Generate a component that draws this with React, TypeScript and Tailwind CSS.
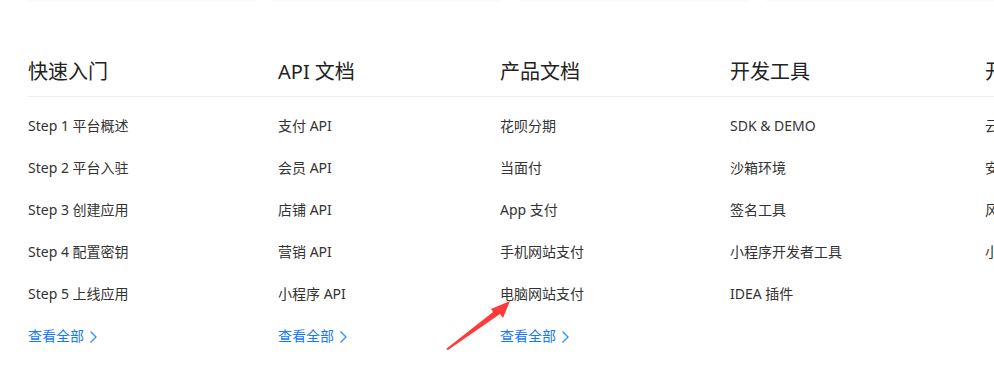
import React from 'react'

type Column = {
  title: string
  width: string
  links: string[]
  more?: boolean
}

const columns: Column[] = [
  {
    title: '快速入门',
    width: 'w-[250px]',
    links: ['Step 1 平台概述', 'Step 2 平台入驻', 'Step 3 创建应用', 'Step 4 配置密钥', 'Step 5 上线应用'],
    more: true,
  },
  {
    title: 'API 文档',
    width: 'w-[222px]',
    links: ['支付 API', '会员 API', '店铺 API', '营销 API', '小程序 API'],
    more: true,
  },
  {
    title: '产品文档',
    width: 'w-[230px]',
    links: ['花呗分期', '当面付', 'App 支付', '手机网站支付', '电脑网站支付'],
    more: true,
  },
  {
    title: '开发工具',
    width: 'w-[255px]',
    links: ['SDK & DEMO', '沙箱环境', '签名工具', '小程序开发者工具', 'IDEA 插件'],
  },
  {
    title: '开放能力',
    width: 'w-[200px]',
    links: ['云服务', '安全中心', '风控能力', '小程序云'],
  },
]

function Chevron() {
  return (
    <svg width="9" height="14" viewBox="0 0 9 14" fill="none" className="ml-[5px] mt-[1px]">
      <path d="M1.5 1.5 L7 7 L1.5 12.5" stroke="#2f8cff" strokeWidth="1.3" />
    </svg>
  )
}

function RedArrow() {
  return (
    <svg className="absolute left-0 top-0 pointer-events-none" width="994" height="380" viewBox="0 0 994 380">
      <path d="M446 349 L493 312 L491 309 L510 301 L503 318 L500 314 L448 350 Z" fill="#ff3a3a" />
    </svg>
  )
}

export default function App() {
  return (
    <div
      className="relative w-[994px] h-[380px] overflow-hidden bg-white"
      style={{ fontFamily: '"Noto Sans", "Noto Sans CJK SC", sans-serif' }}
    >
      {/* faint shadows of the cards above */}
      <div className="flex gap-[18px] pl-[28px] h-[3px]">
        <div className="w-[264px] bg-gradient-to-b from-[#f9f9f9] to-white" />
        <div className="w-[266px] bg-gradient-to-b from-[#f9f9f9] to-white" />
        <div className="w-[266px] bg-gradient-to-b from-[#f9f9f9] to-white" />
        <div className="w-[266px] bg-gradient-to-b from-[#f9f9f9] to-white" />
      </div>

      <div className="pl-[28px] pt-[55px]">
        <div className="flex border-b border-[#eeeeee] pb-[10px]">
          {columns.map(c => (
            <div key={c.title} className={`${c.width} shrink-0 text-[20px] leading-[28px] text-[#222] whitespace-nowrap`}>
              {c.title}
            </div>
          ))}
        </div>

        <div className="flex pt-[19px]">
          {columns.map(c => (
            <div key={c.title} className={`${c.width} shrink-0 flex flex-col`}>
              {c.links.map(l => (
                <div key={l} className="h-[42px] text-[14px] leading-[20px] text-[#333] whitespace-nowrap">
                  {l}
                </div>
              ))}
              {c.more && (
                <div className="flex items-center h-[20px] text-[14px] leading-[20px] text-[#1677ff]">
                  查看全部
                  <Chevron />
                </div>
              )}
            </div>
          ))}
        </div>
      </div>

      <RedArrow />
    </div>
  )
}
